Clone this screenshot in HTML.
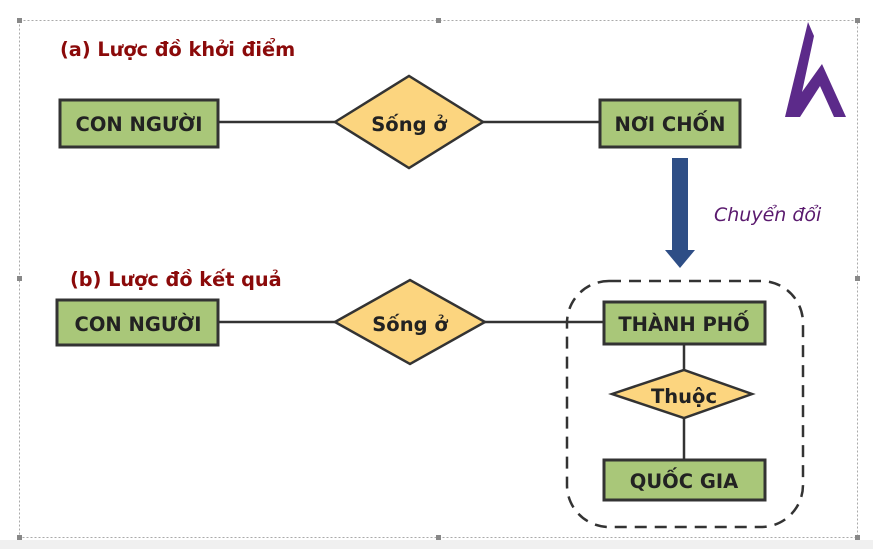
<!DOCTYPE html>
<html><head><meta charset="utf-8"><style>
html,body{margin:0;padding:0;background:#fff;width:873px;height:549px;overflow:hidden}
svg{display:block}
text{font-family:"DejaVu Sans","Liberation Sans",sans-serif;font-weight:bold}
</style></head><body>
<svg width="873" height="549" viewBox="0 0 873 549">
<rect x="0" y="540" width="873" height="9" fill="#f0f0f0"/>
<rect x="19.5" y="20.5" width="838" height="517" fill="none" stroke="#aaa" stroke-dasharray="2,2"/>
<g fill="#888"><rect x="17" y="18" width="5" height="5"/><rect x="436" y="18" width="5" height="5"/><rect x="855" y="18" width="5" height="5"/><rect x="17" y="276" width="5" height="5"/><rect x="855" y="276" width="5" height="5"/><rect x="17" y="535" width="5" height="5"/><rect x="436" y="535" width="5" height="5"/><rect x="855" y="535" width="5" height="5"/></g>
<text x="60" y="56" font-size="19.3" fill="#8b0a0a">(a) Lược đồ khởi điểm</text>
<text x="70" y="286" font-size="19.3" fill="#8b0a0a">(b) Lược đồ kết quả</text>
<g stroke="#333" stroke-width="2.5">
<line x1="218" y1="122" x2="600" y2="122"/>
<line x1="218" y1="322" x2="604" y2="322"/>
<line x1="684" y1="344" x2="684" y2="460"/>
</g>
<g fill="#a9c779" stroke="#333" stroke-width="3">
<rect x="60" y="100" width="158" height="47"/>
<rect x="600" y="100" width="140" height="47"/>
<rect x="57" y="300" width="161" height="45"/>
<rect x="604" y="302" width="161" height="42"/>
<rect x="604" y="460" width="161" height="40"/>
</g>
<g fill="#fcd57f" stroke="#333" stroke-width="2.5">
<polygon points="335,122 409,76 483,122 409,168"/>
<polygon points="335,322 410,280 485,322 410,364"/>
<polygon points="612,394 684,370 752,394 684,418"/>
</g>
<g font-size="19.5" fill="#222" text-anchor="middle">
<text x="139" y="131">CON NGƯỜI</text>
<text x="670" y="131">NƠI CHỐN</text>
<text x="409" y="131">Sống ở</text>
<text x="138" y="331">CON NGƯỜI</text>
<text x="410" y="331">Sống ở</text>
<text x="684" y="331">THÀNH PHỐ</text>
<text x="684" y="403">Thuộc</text>
<text x="684" y="488">QUỐC GIA</text>
</g>
<rect x="567" y="281" width="236" height="246" rx="42" fill="none" stroke="#333" stroke-width="2.5" stroke-dasharray="12,8"/>
<polygon points="672,158 688,158 688,250 695,250 680,268 665,250 672,250" fill="#2e4e86"/>
<text x="714" y="221" font-size="19" font-style="italic" fill="#5a1a6e" style="font-weight:normal">Chuyển đổi</text>
<polygon points="808,22 814,36 802,92 822,64 846,117 834,117 820,86 800,117 785,117" fill="#5c2a8a"/>
</svg>
</body></html>
